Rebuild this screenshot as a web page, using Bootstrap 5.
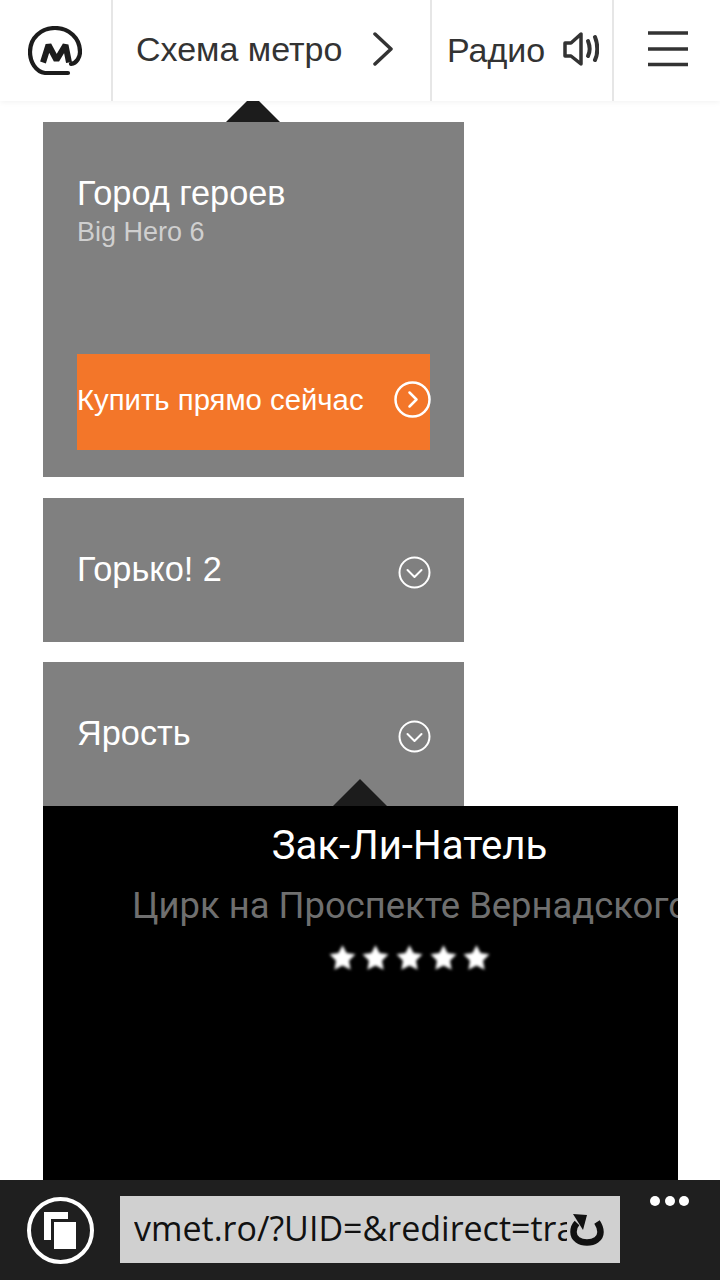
<!DOCTYPE html>
<html lang="ru">
<head>
  <meta charset="UTF-8"/>
  <meta name="viewport" content="width=device-width, initial-scale=1.0"/>
  <title>Метро</title>
  <link href="https://cdn.jsdelivr.net/npm/bootstrap@5.3.0/dist/css/bootstrap.min.css" rel="stylesheet"/>
  <style>
    html, body { height: 100%; }
    body { width: 720px; height: 1280px; overflow: hidden; background: #fff; font-family: "Liberation Sans", Arial, sans-serif; }
    .top-bar { height: 101px; flex: none; color: #333; font-size: 34px; box-shadow: 0 1px 6px rgba(0,0,0,.06); position: relative; z-index: 2; background: #fff; }
    .top-cell { height: 101px; border-right: 2px solid #e6e6e6; }
    .cell-logo { width: 113px; padding-left: 28px; }
    .cell-map { width: 319px; padding-left: 23px; }
    .cell-radio { width: 182px; padding-left: 15px; }
    .cell-menu { flex: 1; padding-left: 34px; border-right: 0; }
    .map-label { margin-bottom: 2px; }
    .map-arrow { margin-left: 30px; }
    .radio-icon { margin-left: 18px; margin-bottom: 3px; }
    .menu-icon { margin-bottom: 3px; }
    .page-body { flex: 1; min-height: 0; overflow: hidden; padding-top: 21px; }
    .movie-list { width: 421px; margin-left: 43px; gap: 20px; color: #fff; }
    .movie-item { background: #808080; position: relative; padding: 0 33px 0 34px; }
    .movie-open { height: 355px; padding-top: 52px; margin-bottom: 1px; }
    .movie-closed { height: 144px; }
    .movie-closed .movie-title { margin-bottom: 2px; }
    .movie-title { font-size: 34.300px; line-height: 38px; }
    .movie-sub { font-size: 27px; line-height: 38px; margin-top: 1px; color: #cfcfcf; }
    .buy-btn { position: absolute; left: 34px; top: 232px; width: 353px; height: 96px; background: #f37629; font-size: 29.300px; padding-bottom: 5px; }
    .buy-icon { margin-right: -1px; }
    .arrow-up { position: absolute; width: 54px; height: 27px; background: #1c1c1c; clip-path: polygon(50% 0, 100% 100%, 0 100%); }
    .arrow-top { left: 183px; top: -27px; }
    .arrow-side { left: 290px; bottom: 0; }
    .event-panel { width: 635px; height: 374px; margin-left: 43px; background: #000; overflow: hidden; position: relative; }
    .event-inner { width: 555px; margin-left: 89px; padding-top: 17px; white-space: nowrap; font-family: Roboto, sans-serif; }
    .event-title { font-size: 40.200px; line-height: 46px; color: #fff; }
    .event-place { font-size: 36.400px; line-height: 44px; margin-top: 15px; color: #6f6f6f; }
    .event-stars { gap: 6.600px; margin-top: 16px; }
    .event-stars svg { filter: blur(1.4px); }
    .browser-bar { height: 100px; flex: none; background: #1f1f1f; padding: 16px 0 0 27px; position: relative; }
    .tabs-icon { margin-top: 1px; }
    .url-box { width: 500px; height: 67px; margin-left: 26px; background: #d0d0d0; padding-left: 14px; overflow: hidden; position: relative; font-family: "Open Sans", sans-serif; font-size: 34px; line-height: 64px; color: #111; white-space: nowrap; }
    .url-text { width: 433px; overflow: hidden; }
    .url-reload { position: absolute; left: 450px; top: 18px; }
    .dots { position: absolute; left: 650px; top: 16px; gap: 4.500px; }
    .dots span { width: 10px; height: 10px; border-radius: 50%; background: #fff; }
  </style>
</head>
<body class="d-flex flex-column">

  <div class="top-bar d-flex">
    <div class="top-cell cell-logo d-flex align-items-center">
      <svg width="54" height="50" viewBox="0 0 54 50" fill="none" stroke="#1c1c1c" stroke-linecap="round" stroke-linejoin="round">
        <path d="M40 47H17C8 46 2 36 2 26C2 12 13 2 27 2S52 12 52 26C52 31 49 37 43 38" stroke-width="4.200"/>
        <path d="M15 36.500L20.500 19L28.500 34L37.500 19L41 36.500" stroke-width="6" stroke-linecap="butt" stroke-linejoin="miter" stroke-miterlimit="2"/>
      </svg>
    </div>
    <div class="top-cell cell-map d-flex align-items-center">
      <span class="map-label">Схема метро</span>
      <svg class="map-arrow mb-1" width="21" height="34" viewBox="0 0 21 34" fill="none" stroke="#333" stroke-width="3.500" stroke-linecap="round" stroke-linejoin="round">
        <path d="M3 2L19 17L3 32"/>
      </svg>
    </div>
    <div class="top-cell cell-radio d-flex align-items-center">
      <span>Радио</span>
      <svg class="radio-icon" width="36" height="34" viewBox="0 0 36 34" fill="none" stroke="#333" stroke-width="3.500" stroke-linecap="round" stroke-linejoin="round">
        <path d="M2 11H8L18 2V32L8 24H2Z"/>
        <path d="M25 9C27 14 27 20 25 24" stroke-width="4"/>
        <path d="M32 5C35 12 35 22 32 28" stroke-width="4"/>
      </svg>
    </div>
    <div class="top-cell cell-menu d-flex align-items-center">
      <svg class="menu-icon" width="40" height="36" viewBox="0 0 40 36" stroke="#333" stroke-width="3.500">
        <path d="M0 2H40M0 18H40M0 33.500H40"/>
      </svg>
    </div>
  </div>

  <div class="page-body">
    <div class="movie-list d-flex flex-column">
      <div class="movie-item movie-open">
        <span class="arrow-up arrow-top"></span>
        <div class="movie-title">Город героев</div>
        <div class="movie-sub">Big Hero 6</div>
        <div class="buy-btn d-flex align-items-center justify-content-between">
          <span>Купить прямо сейчас</span>
          <svg class="buy-icon" width="37" height="37" viewBox="0 0 37 37" fill="none" stroke="#fff" stroke-width="2.500">
            <circle cx="18.500" cy="18.500" r="17"/>
            <path d="M15.500 11.500L22.500 18.500L15.500 25.500" stroke-linecap="round" stroke-linejoin="round"/>
          </svg>
        </div>
      </div>
      <div class="movie-item movie-closed d-flex align-items-center justify-content-between">
        <span class="movie-title">Горько! 2</span>
        <svg class="mt-1" width="33" height="33" viewBox="0 0 33 33" fill="none" stroke="#fff" stroke-width="2">
          <circle cx="16.500" cy="16.500" r="15"/>
          <path d="M9.500 14L16.500 21L23.500 14" stroke-linecap="round" stroke-linejoin="round"/>
        </svg>
      </div>
      <div class="movie-item movie-closed d-flex align-items-center justify-content-between">
        <span class="movie-title">Ярость</span>
        <svg class="mt-1" width="33" height="33" viewBox="0 0 33 33" fill="none" stroke="#fff" stroke-width="2">
          <circle cx="16.500" cy="16.500" r="15"/>
          <path d="M9.500 14L16.500 21L23.500 14" stroke-linecap="round" stroke-linejoin="round"/>
        </svg>
        <span class="arrow-up arrow-side"></span>
      </div>
    </div>
    <div class="event-panel">
      <div class="event-inner text-center">
        <div class="event-title">Зак-Ли-Натель</div>
        <div class="event-place">Цирк на Проспекте Вернадского</div>
        <div class="event-stars d-flex justify-content-center" id="stars"></div>
      </div>
    </div>
  </div>

  <div class="browser-bar d-flex">
    <svg class="tabs-icon" width="67" height="67" viewBox="0 0 67 67" fill="none">
      <circle cx="33.500" cy="33.500" r="31.500" stroke="#fff" stroke-width="4"/>
      <path d="M17 15H41V22H24V43H17Z" fill="#fff"/>
      <path d="M27 25H49V52H27Z" fill="#fff"/>
    </svg>
    <div class="url-box">
      <div class="url-text">vmet.ro/?UID=&amp;redirect=transfer</div>
      <svg class="url-reload" width="34" height="32" viewBox="0 0 34 32" fill="none">
        <path d="M7 9C4 12 3.500 15 3.500 18C3.500 25 10 28.500 17 28.500S30.500 25 30.500 18C30.500 14 29 11 27 8" stroke="#111" stroke-width="6.500"/>
        <path d="M3 0L17 1L13 16Z" fill="#111"/>
      </svg>
    </div>
    <div class="dots d-flex"><span></span><span></span><span></span></div>
  </div>

  <script src="https://cdn.jsdelivr.net/npm/bootstrap@5.3.0/dist/js/bootstrap.bundle.min.js"></script>
  <script>
    const starsBox = document.getElementById("stars");
    for (let i = 0; i < 5; i++) {
      starsBox.innerHTML += '<svg width="27" height="27" viewBox="0 0 24 24"><path fill="#fff" d="M12 1L15.600 8L23.500 9.200L17.800 14.800L19.200 22.800L12 19L4.800 22.800L6.200 14.800L.500 9.200L8.400 8Z"/></svg>';
    }
  </script>
</body>
</html>
